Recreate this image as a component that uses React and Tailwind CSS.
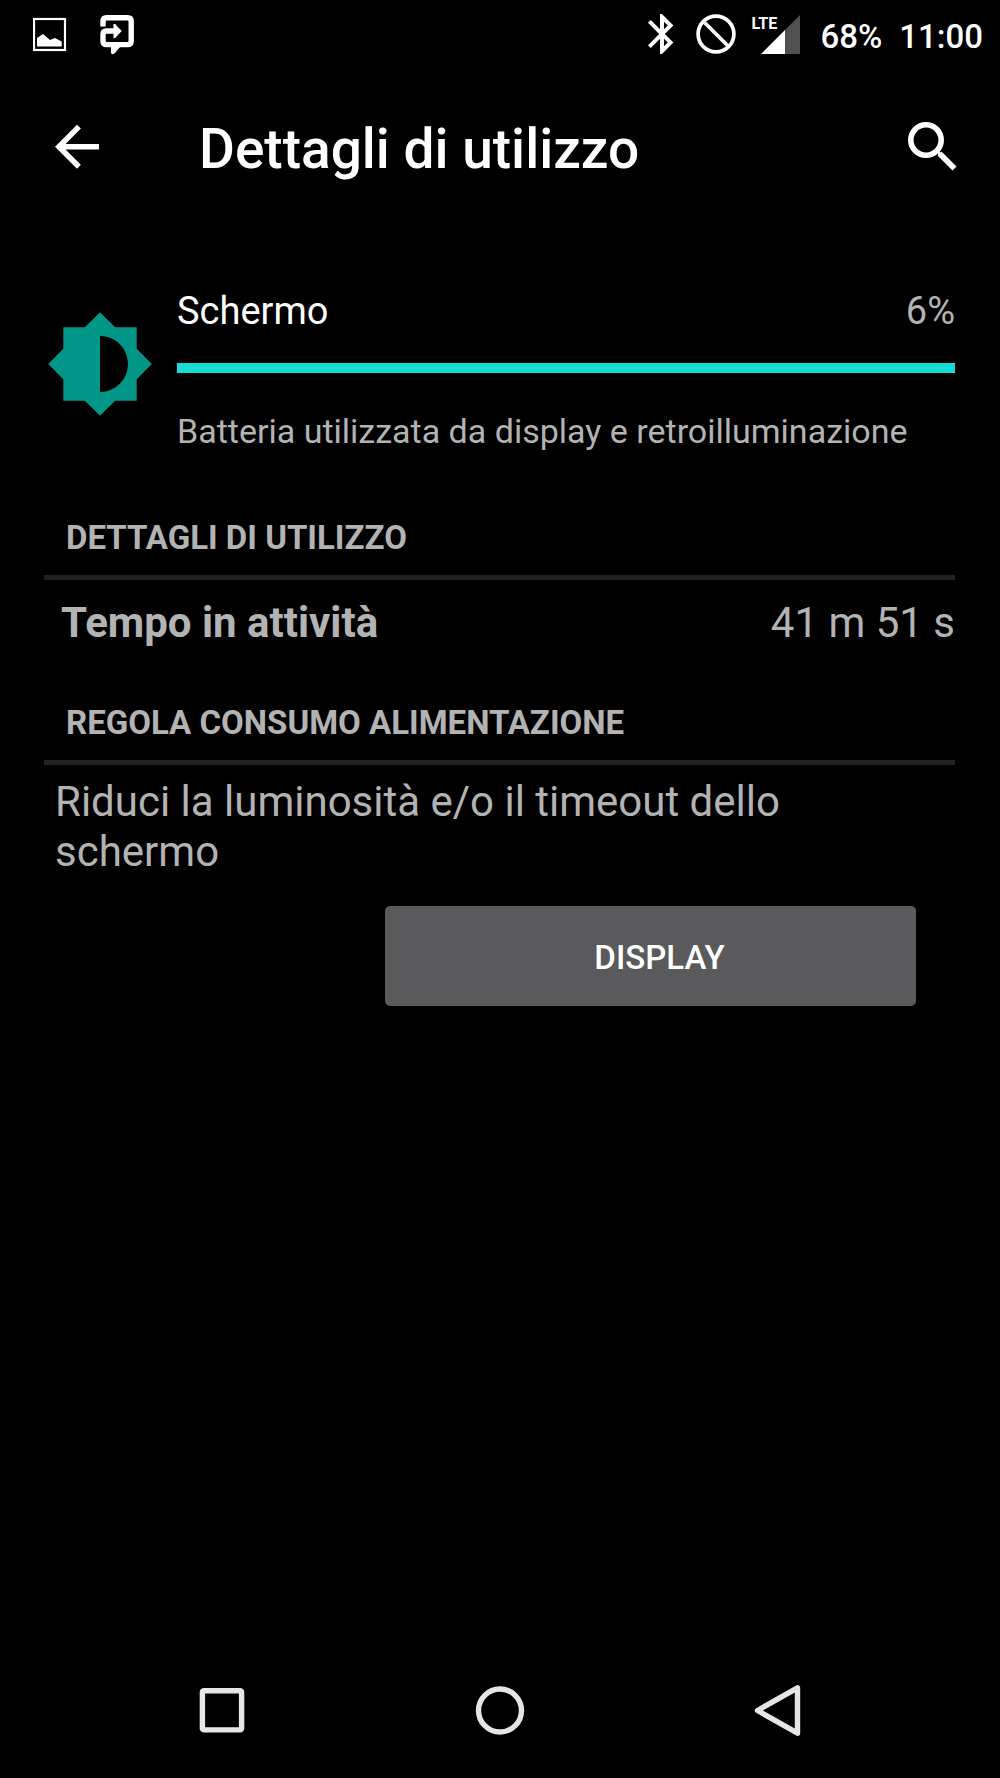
function ImageIcon() {
  return (
    <svg className="h-[42px] w-[34px]" viewBox="33 14 34 42" aria-hidden="true">
      <rect x="34" y="19" width="31" height="31" fill="none" stroke="white" strokeWidth="2.2" />
      <path d="M37 46.5V38l6-4 7 6 5-2 6.7 3.4v5.1z" fill="white" />
    </svg>
  );
}

function ShareBubbleIcon() {
  return (
    <svg className="h-[42px] w-[35px]" viewBox="100 14 35 42" aria-hidden="true">
      <path
        d="M103 26.5V21.5Q103 17.8 106.7 17.8H127.5Q131.2 17.8 131.2 21.5V41Q131.2 44.6 127.5 44.6H106.7Q103 44.6 103 41V34.5Q103 31 106.5 31H115"
        fill="none"
        stroke="white"
        strokeWidth="5.4"
      />
      <path d="M113.5 24.5Q114 23.3 115.2 24.3L121.7 31L115.2 37.9Q114 38.8 113.5 37.6z" fill="white" />
      <path d="M111 46H121L114.5 53.5Q111.5 55.5 111 52.5z" fill="white" />
    </svg>
  );
}

function BluetoothIcon() {
  return (
    <svg className="h-[42px] w-[26px]" viewBox="5 2 13 21" fill="white" aria-hidden="true">
      <path d="M17.71 7.71L12 2h-1v7.59L6.41 5 5 6.41 10.59 12 5 17.59 6.41 19 11 14.41V22h1l5.71-5.71-4.3-4.29 4.3-4.29zM13 5.83l1.88 1.88L13 9.59V5.83zm1.88 10.46L13 18.17v-3.76l1.88 1.88z" />
    </svg>
  );
}

function BlockedIcon() {
  return (
    <svg className="h-[42px] w-[40px]" viewBox="0 0 40 42" fill="none" stroke="white" strokeWidth="3.7" aria-hidden="true">
      <circle cx="20" cy="20" r="17.9" />
      <path d="M7.5 7.5L32.5 32.5" />
    </svg>
  );
}

function SignalIcon() {
  return (
    <div className="relative h-[42px] w-[49px]">
      <svg className="h-[42px] w-[49px]" viewBox="752 14 49 42" aria-hidden="true">
        <path d="M786 54V30L801 15V54z" fill="#505050" />
        <path d="M762 54L786 30V54z" fill="white" />
      </svg>
      <span className="absolute top-0 left-0 text-[16px] leading-[20px] font-bold">LTE</span>
    </div>
  );
}

function BackArrowIcon() {
  return (
    <svg className="h-[54px] w-[44px]" viewBox="0 0 44 54" fill="white" aria-hidden="true">
      <path transform="translate(-11 -8.3) scale(2.75)" d="M20 11H7.83l5.59-5.59L12 4l-8 8 8 8 1.41-1.41L7.83 13H20v-2z" />
    </svg>
  );
}

function SearchIcon() {
  return (
    <svg className="h-[54px] w-[49px]" viewBox="0 0 49 54" fill="none" stroke="white" aria-hidden="true">
      <circle cx="18" cy="18" r="15.2" strokeWidth="5.6" />
      <path d="M29 29L33 33" strokeWidth="3" />
      <path d="M31.5 31.5L46.5 46.5" strokeWidth="5.6" />
    </svg>
  );
}

function BrightnessIcon() {
  return (
    <svg className="mt-[21px] h-[110px] w-[110px] shrink-0" viewBox="0 0 24 24" fill="#009688" aria-hidden="true">
      <path d="M20 15.31L23.31 12 20 8.69V4h-4.69L12 .69 8.69 4H4v4.69L.69 12 4 15.31V20h4.69L12 23.31 15.31 20H20v-4.69zM12 18.1V5.9c3.4 0 6.1 2.7 6.1 6.1s-2.7 6.1-6.1 6.1z" />
    </svg>
  );
}

function SectionTitle({ children }) {
  return (
    <h2 className="border-b-[5px] border-[#212121] pb-[17px] pl-[22px] text-[33px] leading-[40px] font-bold uppercase">
      {children}
    </h2>
  );
}

export default function App() {
  return (
    <div className="flex min-h-screen flex-col bg-black font-['Roboto',sans-serif] text-[#b3b3b3]">
      <div className="flex h-[70px] items-center pr-[17px] pl-[33px] text-[33px] leading-[42px] font-medium text-white">
        <div className="flex gap-[33px]">
          <ImageIcon />
          <ShareBubbleIcon />
        </div>
        <div className="ml-auto flex items-center">
          <BluetoothIcon />
          <div className="ml-[22px] flex gap-[15px]">
            <BlockedIcon />
            <SignalIcon />
          </div>
          <div className="ml-[20px] flex gap-[17px] pt-[3px]">
            <span>68%</span>
            <span>11:00</span>
          </div>
        </div>
      </div>

      <header className="flex h-[158px] items-center pr-[43px] pl-[55px] text-white">
        <button type="button" aria-label="Indietro">
          <BackArrowIcon />
        </button>
        <h1 className="ml-[100px] text-[55px] leading-[66px] font-medium">Dettagli di utilizzo</h1>
        <button type="button" aria-label="Cerca" className="ml-auto">
          <SearchIcon />
        </button>
      </header>

      <main className="flex-1 pt-[60px] pr-[45px] pl-[44px]">
        <section className="flex items-start gap-[22px] pl-px">
          <BrightnessIcon />
          <div className="flex-1">
            <div className="flex justify-between text-[38px] leading-[46px]">
              <span className="text-white">Schermo</span>
              <span>6%</span>
            </div>
            <div className="mt-[29px] h-[10px] bg-[#15ddd3]" />
            <p className="mt-[38px] text-[34px] leading-[40px]">Batteria utilizzata da display e retroilluminazione</p>
          </div>
        </section>

        <section className="mt-[67px]">
          <SectionTitle>Dettagli di utilizzo</SectionTitle>
          <dl className="mt-[18px] flex justify-between pl-[17px] text-[42px] leading-[50px]">
            <dt className="font-bold">Tempo in attività</dt>
            <dd>41 m 51 s</dd>
          </dl>
        </section>

        <section className="mt-[55px]">
          <SectionTitle>Regola consumo alimentazione</SectionTitle>
          <p className="mt-[12px] pr-[39px] pl-[11px] text-[42px] leading-[50px]">
            Riduci la luminosità e/o il timeout dello schermo
          </p>
          <div className="mt-[29px] flex justify-end pr-[39px]">
            <button
              type="button"
              className="h-[100px] w-[531px] rounded-[5px] bg-[#5a5a5c] pt-1 pl-[18px] text-[33px] leading-[40px] font-medium text-white"
            >
              DISPLAY
            </button>
          </div>
        </section>
      </main>

      <nav className="flex h-[136px] items-center justify-center gap-[224px]">
        <button type="button" aria-label="App recenti">
          <svg className="h-[54px] w-[54px]" viewBox="0 0 54 54" fill="none" stroke="#e6e6e6" strokeWidth="5.4" aria-hidden="true">
            <rect x="7.4" y="7.7" width="39.2" height="39.2" rx="1.5" />
          </svg>
        </button>
        <button type="button" aria-label="Home">
          <svg className="h-[54px] w-[54px]" viewBox="0 0 54 54" fill="none" stroke="#e6e6e6" strokeWidth="5.4" aria-hidden="true">
            <circle cx="27" cy="27.5" r="21.5" />
          </svg>
        </button>
        <button type="button" aria-label="Indietro">
          <svg className="h-[54px] w-[54px]" viewBox="0 0 54 54" fill="none" stroke="#e6e6e6" strokeWidth="5.4" strokeLinejoin="round" aria-hidden="true">
            <path d="M46.5 4.8V50.2L6.5 27.5z" />
          </svg>
        </button>
      </nav>
    </div>
  );
}
